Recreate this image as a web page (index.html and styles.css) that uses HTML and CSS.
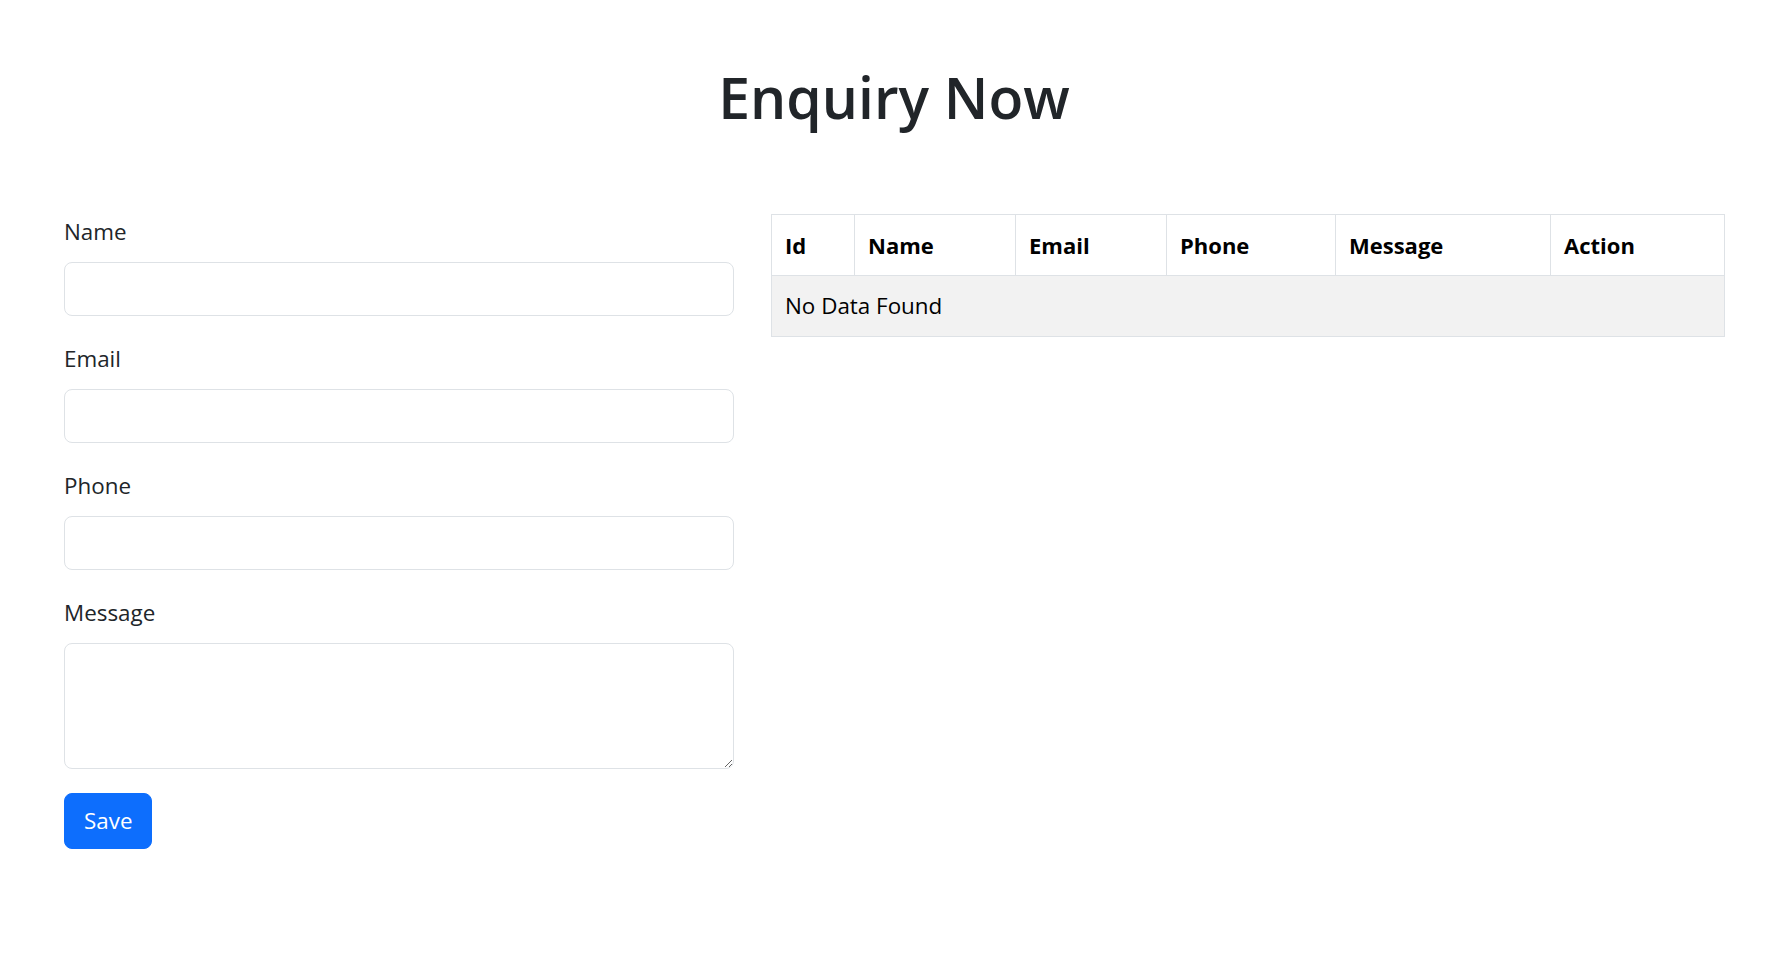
FILE: index.html
```html
<!DOCTYPE html>
<html lang="en">
<head>
<meta charset="utf-8">
<title>Enquiry Now</title>
<link rel="stylesheet" href="styles.css">
</head>
<body>
<div class="page">
  <h1 class="title">Enquiry Now</h1>
  <div class="content">
    <form class="enquiry-form">
      <div class="field">
        <label class="field-label" for="name">Name</label>
        <input class="field-input" id="name" type="text">
      </div>
      <div class="field">
        <label class="field-label" for="email">Email</label>
        <input class="field-input" id="email" type="email">
      </div>
      <div class="field">
        <label class="field-label" for="phone">Phone</label>
        <input class="field-input" id="phone" type="text">
      </div>
      <div class="field field-last">
        <label class="field-label" for="message">Message</label>
        <textarea class="field-input field-textarea" id="message"></textarea>
      </div>
      <button class="btn-save" type="button">Save</button>
    </form>
    <table class="data-table">
      <colgroup>
        <col class="col-id">
        <col class="col-name">
        <col class="col-email">
        <col class="col-phone">
        <col class="col-message">
        <col class="col-action">
      </colgroup>
      <thead>
        <tr>
          <th>Id</th>
          <th>Name</th>
          <th>Email</th>
          <th>Phone</th>
          <th>Message</th>
          <th>Action</th>
        </tr>
      </thead>
      <tbody>
        <tr>
          <td colspan="6">No Data Found</td>
        </tr>
      </tbody>
    </table>
  </div>
</div>
</body>
</html>
```

FILE: styles.css
```css
* {
  box-sizing: border-box;
}

body {
  margin: 0;
  background: #fff;
  color: #212529;
  font-family: "Open Sans", "Noto Sans", "Liberation Sans", sans-serif;
  font-size: 22.4px;
}

.page {
  padding: 62px 41px 0 64px;
}

.title {
  margin: 0 0 82px;
  text-align: center;
  font-size: 57px;
  line-height: 70px;
  font-weight: 600;
  color: #212529;
}

.content {
  display: grid;
  grid-template-columns: 670px 1fr;
  column-gap: 37px;
  align-items: start;
}

.enquiry-form {
  display: flex;
  flex-direction: column;
  align-items: flex-start;
  padding-top: 1px;
}

.field {
  width: 100%;
  margin-bottom: 26px;
}

.field-last {
  margin-bottom: 24px;
}

.field-label {
  display: block;
  line-height: 34px;
  margin-bottom: 13px;
  color: #212529;
}

.field-input {
  display: block;
  width: 100%;
  height: 54px;
  border: 1px solid #dee2e6;
  border-radius: 8px;
  background: #fff;
  font: inherit;
  padding: 8px 17px;
}

.field-textarea {
  height: 126px;
  resize: vertical;
}

.btn-save {
  height: 56px;
  padding: 0 19px;
  border: 1px solid #0d6efd;
  border-radius: 8px;
  background: #0d6efd;
  color: #fff;
  font: inherit;
  line-height: 34px;
}

.data-table {
  width: 100%;
  table-layout: fixed;
  border-collapse: collapse;
  border: 1px solid #dee2e6;
  color: #000;
}

.col-id { width: 83px; }
.col-name { width: 161px; }
.col-email { width: 151px; }
.col-phone { width: 169px; }
.col-message { width: 215px; }
.col-action { width: 174px; }

.data-table th,
.data-table td {
  border: 1px solid #dee2e6;
  padding: 13px 13px;
  line-height: 34px;
  text-align: left;
  vertical-align: top;
}

.data-table th {
  font-size: 22px;
  font-weight: 700;
  background: #fff;
}

.data-table td {
  background: #f2f2f2;
  font-size: 22.4px;
}
```
